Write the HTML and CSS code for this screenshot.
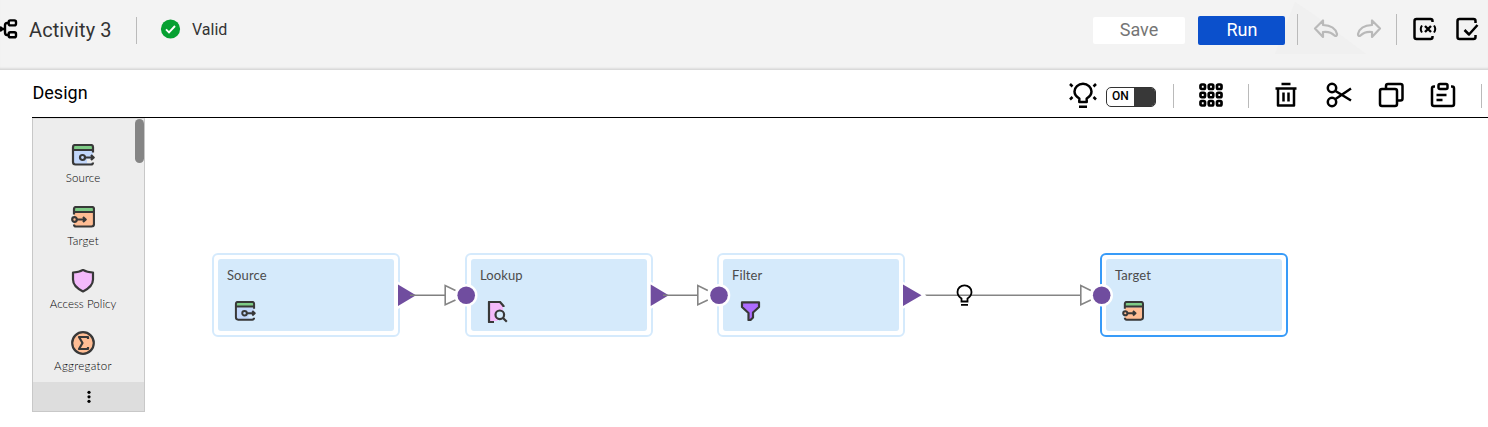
FILE: index.html
```html
<!DOCTYPE html>
<html lang="en">
<head>
<meta charset="utf-8">
<title>Activity 3</title>
<link rel="stylesheet" href="styles.css">
</head>
<body>
<svg class="defs" width="0" height="0" aria-hidden="true">
  <symbol id="source" viewBox="0 0 24 22">
    <path d="M2 7h20v8h-6v4h6v1a1 1 0 0 1-1 1H4a2 2 0 0 1-2-2z" fill="#c2d7fb"/>
    <path d="M2 6V3a2 2 0 0 1 2-2h16a2 2 0 0 1 2 2v3z" fill="#7ecb86"/>
    <path d="M22 8.500V3a2 2 0 0 0-2-2H4a2 2 0 0 0-2 2v15a2.500 2.500 0 0 0 2.500 2.500H20q2 0 2-2M2 6h20M14 13.500h8.500M20 11l2.700 2.500L20 16" class="ink"/>
    <circle cx="11.500" cy="13.500" r="2.500" class="ink"/>
  </symbol>
  <symbol id="target" viewBox="0 0 24 22">
    <path d="M3 7h20v11a2 2 0 0 1-2 2H3z" fill="#ffbd94"/>
    <path d="M3 6V3a2 2 0 0 1 2-2h16a2 2 0 0 1 2 2v3z" fill="#7ecb86"/>
    <path d="M3 8.500V3a2 2 0 0 1 2-2h16a2 2 0 0 1 2 2v15a2.500 2.500 0 0 1-2.500 2.500H5q-2 0-2-2M3 6h20M6 13.500h8M12 11l2.700 2.500L12 16" class="ink"/>
    <circle cx="3.500" cy="13.500" r="2.300" class="ink" fill="#ffbd94"/>
  </symbol>
</svg>

<header class="header">
  <svg class="flow" width="20" height="24" viewBox="0 0 20 24"><g fill="none" stroke="#000" stroke-width="2.400"><rect x="8.700" y="3.400" width="7.300" height="5" rx="1.600"/><rect x="8.700" y="15.300" width="7.300" height="5" rx="1.600"/><path d="M8.500 6H7Q5 6 5 8v7.500Q5 18 7 18h1.500M5 12H0"/></g><circle cx="0" cy="12" r="2.800"/></svg>
  <h1 class="title">Activity 3</h1>
  <span class="rule rule-title"></span>
  <svg class="check" width="20" height="20" viewBox="0 0 20 20"><circle cx="10.500" cy="10" r="9.600" fill="#06a031"/><path d="M6 10.300l3 3 6-6.300" fill="none" stroke="#fff" stroke-width="1.900"/></svg>
  <span class="status">Valid</span>
  <svg class="shade" width="92" height="52" viewBox="0 0 92 52"><path d="M20 0L0 52h91L38 12z" fill="#f0f0f0"/></svg>
  <div class="actions">
    <button class="btn save">Save</button>
    <button class="btn run">Run</button>
    <span class="rule tall"></span>
    <svg class="icon undo" width="26" height="24" viewBox="0 0 26 24"><path d="M2 11.500L10 3.500V8Q22 8.500 24 17q0 3-2.500 1.500Q17 14 10 15v5z"/></svg>
    <svg class="icon redo" width="26" height="24" viewBox="0 0 26 24"><path d="M24 11.500L16 3.500V8Q4 8.500 2 17q0 3 2.500 1.500Q9 14 16 15v5z"/></svg>
    <span class="rule tall rule-undo"></span>
    <svg class="icon vars" width="26" height="24" viewBox="0 0 26 24"><path d="M20.500 5V4q0-2-2-2h-14q-2 0-2 2v16q0 2 2 2h14q2 0 2-2v-1"/><path d="M10 8.500Q7.500 12 10 15.500M22 8.500q2.500 3.500 0 7" stroke-width="2"/><path d="M13 9l6 6M19 9l-6 6" stroke-width="2.400"/></svg>
    <svg class="icon validate" width="26" height="24" viewBox="0 0 26 24"><path d="M20.500 6V4q0-2-2-2h-14q-2 0-2 2v16q0 2 2 2h14q2 0 2-2v-2M9.500 13l4.500 4.500L22.500 8"/></svg>
  </div>
</header>

<section class="toolbar">
  <h2 class="design">Design</h2>
  <div class="tools">
    <svg class="icon bulb" width="28" height="28" viewBox="0 0 28 28"><path d="M10.300 20v-3.500Q5.500 13.500 5.500 9.500a8.500 7.700 0 0 1 17 0q0 4-4.800 7V20zM10 24.800h8M1 2l2.500 2.500M27 2l-2.500 2.500M1 17.500L3.500 15M27 17.500L24.500 15"/></svg>
    <div class="toggle"><span class="on">ON</span><span class="knob"></span></div>
    <span class="rule sep sep-a"></span>
    <svg class="icon grid" width="26" height="26" viewBox="0 0 26 26"><g stroke-width="2.700"><rect x="2.500" y="2.500" width="4.500" height="4.500" rx="1.200"/><rect x="10.750" y="2.500" width="4.500" height="4.500" rx="1.200"/><rect x="19" y="2.500" width="4.500" height="4.500" rx="1.200"/><rect x="2.500" y="10.750" width="4.500" height="4.500" rx="1.200"/><rect x="10.750" y="10.750" width="4.500" height="4.500" rx="1.200"/><rect x="19" y="10.750" width="4.500" height="4.500" rx="1.200"/><rect x="2.500" y="19" width="4.500" height="4.500" rx="1.200"/><rect x="10.750" y="19" width="4.500" height="4.500" rx="1.200"/><rect x="19" y="19" width="4.500" height="4.500" rx="1.200"/></g></svg>
    <span class="rule sep sep-b"></span>
    <svg class="icon trash" width="26" height="26" viewBox="0 0 26 26"><path d="M2.500 6.500h21M8.500 2h9M5 7v16.500h16V7M10.500 10.500v9M15.500 10.500v9"/></svg>
    <svg class="icon" width="26" height="26" viewBox="0 0 26 26"><circle cx="6" cy="6" r="4.200"/><circle cx="6" cy="20" r="4.200"/><path d="M9.500 9L25 18.500M9.500 17L25 6.500"/></svg>
    <svg class="icon" width="26" height="26" viewBox="0 0 26 26"><rect x="2" y="7" width="17" height="17" rx="2"/><path d="M8 6V4q0-2 2-2h12.500q2 0 2 2v12.500q0 2-2 2H20"/></svg>
    <svg class="icon" width="26" height="26" viewBox="0 0 26 26"><rect x="8.500" y="2" width="9" height="5" rx="1.500"/><path d="M5 4.500H4q-2 0-2 2V22q0 2 2 2h18q2 0 2-2V6.500q0-2-2-2h-1M6.500 13h10M6.500 18h6"/></svg>
    <span class="rule sep sep-c"></span>
  </div>
</section>

<main class="workspace">
  <aside class="palette">
    <div class="list">
      <div class="item"><svg width="24" height="24" viewBox="0 -1 24 24"><use href="#source" width="24" height="22"/></svg><span class="lab l-source">Source</span></div>
      <div class="item"><svg width="24" height="24" viewBox="0 0 24 24"><use href="#target" width="24" height="22"/></svg><span class="lab l-target">Target</span></div>
      <div class="item"><svg width="24" height="24" viewBox="0 1 24 24"><path class="ink" d="M12 1.900Q16 4.500 22 4.500v7q0 7-10 12Q2 18.500 2 11.500v-7Q8 4.500 12 1.900z" fill="#f4bafb"/></svg><span class="lab l-policy">Access Policy</span></div>
      <div class="item"><svg width="24" height="24" viewBox="0 0 24 24"><circle class="ink" cx="12" cy="12" r="10.800" fill="#ffbd94"/><path class="ink" d="M17 8V6H8l3.500 6L8 18h9v-2"/></svg><span class="lab l-agg">Aggregator</span></div>
      <span class="thumb"></span>
    </div>
    <div class="more"><svg width="4" height="14" viewBox="0 0 4 14"><circle cx="2" cy="2.300" r="1.600"/><circle cx="2" cy="6.800" r="1.600"/><circle cx="2" cy="11.300" r="1.600"/></svg></div>
  </aside>
  <div class="canvas">
    <div class="node n-source"><div class="body"><span class="name">Source</span><svg class="glyph" width="22" height="20" viewBox="0 0 24 22"><use href="#source" width="24" height="22"/></svg></div></div>
    <div class="node n-lookup"><div class="body"><span class="name">Lookup</span><svg class="glyph" width="21" height="22" viewBox="0 0 21 22"><path d="M2 1h10l4 4v8l-6 7H2z" fill="#f4bafb"/><path class="ink" d="M16.500 6V5L13 1H2v20h5M15.500 16.500l4.300 4.300"/><circle class="ink" cx="12.800" cy="13.800" r="4.300" fill="#d5eafb"/></svg></div></div>
    <div class="node n-filter"><div class="body"><span class="name">Filter</span><svg class="glyph g-filter" width="21" height="20" viewBox="0 0 21 20"><path class="ink" d="M2 1.300h17V6l-6 5.500v5L10.500 19H8.500v-7L2 6z" fill="#ad6cff"/></svg></div></div>
    <div class="node n-target"><div class="body"><span class="name">Target</span><svg class="glyph" width="22" height="20" viewBox="0 0 24 22"><use href="#target" width="24" height="22"/></svg></div></div>
    <svg class="wires" width="1343" height="309" viewBox="145 118 1343 309">
      <g fill="none" stroke="#858585" stroke-width="1.600"><path d="M455.500 290.500L445.200 285.500v19.300l10.300-4.800M707.800 290.500L697.800 285.500v19.300l10-4.800M925 295.200h156M1090.800 290.500L1080.800 285.500v19.300l10-4.800"/></g>
      <g fill="#704d9f" stroke="#fff" stroke-width="5" paint-order="stroke"><path d="M398 284.500v21.500l18-10.700zM650.700 284.500v21.500l18-10.700zM903 284.500v21.500l18.500-10.700z"/><circle cx="466.200" cy="295.200" r="8.800"/><circle cx="719" cy="295.200" r="8.800"/><circle cx="1101.700" cy="295.200" r="8.800"/></g>
      <path d="M410 295.200h35M663 295.200h35" stroke="#808080" stroke-width="1.600"/>
      <path d="M961.500 301.500v-3q-4-2.500-4-6.500a7 6.700 0 0 1 14 0q0 4-4 6.500v3zM961 304.800h7" fill="none" stroke="#000" stroke-width="1.800"/>
    </svg>
  </div>
</main>
</body>
</html>
```
FILE: styles.css
```css
* { box-sizing: border-box; }
body { margin: 0; width: 1488px; height: 427px; overflow: hidden; background: #fff; font-family: Roboto, sans-serif; color: #000; }
svg { display: block; flex: none; }
.defs { position: absolute; }
h1, h2 { margin: 0; font-weight: 400; }
.ink { stroke: #383838; stroke-width: 2.2; stroke-linejoin: round; }
path.ink:not([fill]), circle.ink:not([fill]) { fill: none; }

.header { position: relative; display: flex; align-items: center; height: 70px; padding: 0 7px 11px 0; background: #f3f3f3; border-bottom: 1px solid #d9d9d9; box-shadow: inset 0 -2px 2px -1px #ddd; }
.flow { margin-right: 9px; }
.title { width: 107px; padding-top: 2px; font-size: 20px; letter-spacing: 0.1px; line-height: 24px; color: #333; white-space: nowrap; }
.rule { width: 1px; flex: none; background: #bababa; }
.rule-title { height: 27px; margin-right: 23px; margin-top: 2px; }
.check { margin-right: 12px; overflow: visible; }
.status { padding-top: 1px; font-size: 16px; line-height: 20px; color: #333; }
.shade { position: absolute; left: 1275px; top: 2px; }
.actions { position: relative; display: flex; align-items: center; margin-left: auto; }
.btn { border: 0; padding: 0; font: 18px/26px Roboto, sans-serif; text-align: center; border-radius: 2px; }
.save { width: 92px; height: 27px; margin: 2px 13px 0 0; padding-bottom: 1px; background: #fff; color: #757575; }
.run { width: 87px; height: 29px; margin: 2px 12px 0 0; padding: 0 0 1px 1px; background: #0b50cc; color: #fff; }
.tall { height: 31px; margin-right: 15px; }
.icon { fill: none; stroke: #000; stroke-width: 2.5; stroke-linejoin: round; }
.undo, .redo { stroke: #b9b9b9; stroke-width: 2.2; }
.undo { margin-right: 17px; }
.redo { margin-right: 14px; }
.vars { margin-right: 17px; }

.toolbar { display: flex; margin-left: 32px; height: 48px; border-bottom: 1px solid #000; }
.design { margin: 12px 0 0 0; padding-left: 0.5px; font-size: 18px; line-height: 22px; }
.tools { display: flex; align-items: center; margin-left: auto; padding: 3px 6px 0 0; }
.bulb { margin-top: 2px; }
.toggle { display: flex; width: 50px; height: 20px; margin: 3px 17px 0 9px; overflow: hidden; border: 1px solid #333; border-radius: 5px; }
.on { width: 27px; padding-left: 5px; font-size: 12px; font-weight: 500; line-height: 17px; }
.knob { flex: 1; background: #383838; }
.sep { height: 24px; margin-top: 1px; }
.sep-a { margin-right: 24px; }
.grid { margin-right: 24px; }
.sep-b { margin-right: 24px; }
.tools .trash { margin-right: 1px; }
.tools .trash ~ .icon { margin-left: 26px; }
.sep-c { margin-left: 25px; }

.workspace { display: flex; height: 309px; }
.palette { width: 113px; height: 294px; margin-left: 32px; display: flex; flex-direction: column; border: 1px solid #c8c8c8; border-top-color: #ddd; background: #ededed; flex: none; }
.list { position: relative; height: 263px; padding-top: 24px; padding-right: 11px; overflow: hidden; }
.item { display: flex; flex-direction: column; align-items: center; height: 62.8px; }
.lab { margin-top: 3px; font: 300 11.5px/15px Lato, sans-serif; white-space: nowrap; }
.l-source { letter-spacing: 0.1px; }
.l-target { letter-spacing: 0.2px; }
.l-policy { letter-spacing: 0.05px; }
.l-agg { letter-spacing: 0.3px; }
.thumb { position: absolute; right: 0; top: 0; width: 9px; height: 44px; border-radius: 5px; background: #858585; }
.more { flex: 1; display: flex; align-items: center; justify-content: center; background: #ddd; }

.canvas { position: relative; flex: 1; }
.node { position: absolute; top: 135px; width: 188px; height: 84px; padding: 4px; border: 2px solid #d5eafc; border-radius: 6px; background: #fff; }
.n-source { left: 67px; }
.n-lookup { left: 320px; }
.n-filter { left: 572px; }
.n-target { left: 955px; border-color: #389bf8; }
.body { display: flex; flex-direction: column; align-items: flex-start; height: 100%; padding: 7px 9px; border-radius: 3px; background: #d5eafb; }
.name { font: 400 13px/18px Lato, sans-serif; color: #4c4c4c; letter-spacing: 0.1px; }
.glyph { margin: 17px 0 0 7px; }
.g-filter { margin-left: 8px; }
.wires { position: absolute; left: 0; top: 0; }
```
